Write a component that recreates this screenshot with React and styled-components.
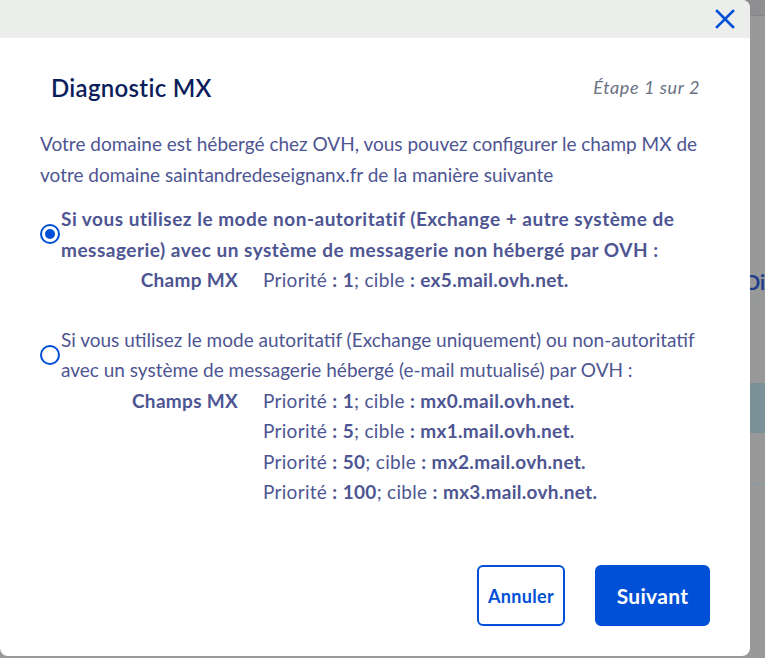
import styled, { createGlobalStyle } from "styled-components";

const GlobalStyle = createGlobalStyle`
  html, body {
    margin: 0;
    padding: 0;
  }
  body {
    font-family: Lato, "Noto Sans", "Liberation Sans", sans-serif;
    background: #999999;
  }
`;

const Screen = styled.div`
  position: relative;
  width: 765px;
  height: 658px;
  overflow: hidden;
  background: #999999;
`;

/* page behind the backdrop, only its right edge shows */
const BackPage = styled.div`
  display: flex;
  flex-direction: column;
  height: 100%;
  padding-left: 745px;
  box-sizing: border-box;
`;

const BackTopBar = styled.div`
  height: 15px;
  background: #8f8f91;
  border-bottom: 1px solid #858587;
`;

const BackHeading = styled.div`
  margin-top: 254px;
  height: 30px;
  font-size: 20px;
  font-weight: 700;
  color: #223d8c;
  white-space: nowrap;
  border-bottom: 1px solid #8c9aa0;
`;

const BackRow = styled.div`
  height: ${(p) => p.$h}px;
  background: ${(p) => p.$bg || "transparent"};
  border-bottom: ${(p) => (p.$line ? "1px solid #7f9aa3" : "none")};
`;

const Modal = styled.div`
  position: absolute;
  left: 0;
  top: 0;
  width: 750px;
  height: 656px;
  background: #ffffff;
  border-radius: 0 8px 8px 8px;
  overflow: hidden;
  display: flex;
  flex-direction: column;
`;

const ModalTop = styled.div`
  height: 38px;
  background: #eceeec;
  display: flex;
  justify-content: flex-end;
  align-items: center;
  padding-right: 14px;
`;

const CloseButton = styled.button`
  border: none;
  background: none;
  padding: 0;
  width: 22px;
  height: 22px;
  display: flex;
  cursor: pointer;
`;

const Body = styled.div`
  flex: 1;
  display: flex;
  flex-direction: column;
  padding: 0 40px 30px 40px;
`;

const TitleRow = styled.div`
  display: flex;
  justify-content: space-between;
  align-items: center;
  padding: 34px 10px 0 11px;
  height: 30px;
`;

const Title = styled.h2`
  margin: 0;
  font-size: 24px;
  font-weight: 600;
  color: #0b1e5b;
  letter-spacing: 0.3px;
`;

const Step = styled.span`
  font-size: 18px;
  font-style: italic;
  color: #6b7183;
  letter-spacing: 0.6px;
`;

const Intro = styled.p`
  margin: 26px 0 0 0;
  font-size: 19px;
  line-height: 31px;
  color: #4d5592;
`;

const Option = styled.label`
  display: flex;
  align-items: flex-start;
  margin-top: ${(p) => p.$top}px;
  cursor: pointer;
`;

const Radio = styled.span`
  flex: none;
  width: 20px;
  height: 20px;
  margin-top: 20px;
  box-sizing: border-box;
  border-radius: 50%;
  border: 2px solid #0050d7;
  display: flex;
  align-items: center;
  justify-content: center;

  &::after {
    content: "";
    width: 10px;
    height: 10px;
    border-radius: 50%;
    background: ${(p) => (p.$checked ? "#0050d7" : "transparent")};
  }
`;

const OptionText = styled.div`
  margin-left: 1px;
  font-size: 19px;
  line-height: 30.5px;
  letter-spacing: ${(p) => (p.$bold ? "0.5px" : "0")};
  color: #4d5592;
  font-weight: ${(p) => (p.$bold ? 700 : 400)};
`;

const Records = styled.div`
  display: grid;
  grid-template-columns: 158px auto;
  column-gap: 25px;
  font-size: 19px;
  line-height: 30.5px;
  letter-spacing: 0.3px;
  color: #4d5592;
  margin-left: 20px;
`;

const RecordLabel = styled.div`
  grid-column: 1;
  text-align: right;
  font-weight: 700;
`;

const RecordValue = styled.div`
  grid-column: 2;
  font-weight: 400;

  b {
    font-weight: 700;
  }
`;

const Footer = styled.div`
  margin-top: auto;
  display: flex;
  justify-content: flex-end;
  gap: 30px;
`;

const Button = styled.button`
  height: 61px;
  border-radius: 6px;
  border: 2px solid #0050d7;
  font-family: inherit;
  font-weight: 700;
  cursor: pointer;
  padding: 0;
  width: ${(p) => (p.$primary ? "115px" : "88px")};
  font-size: ${(p) => (p.$primary ? "21px" : "18px")};
  letter-spacing: 0.3px;
  background: ${(p) => (p.$primary ? "#0050d7" : "#ffffff")};
  color: ${(p) => (p.$primary ? "#ffffff" : "#0050d7")};
`;

function RecordList({ label, records }) {
  return (
    <Records>
      {records.map((r, i) => [
        i === 0 ? <RecordLabel key={"l" + i}>{label}</RecordLabel> : null,
        <RecordValue key={"v" + i}>
          Priorité <b>:</b> <b>{r.priority}</b>; cible <b>:</b> <b>{r.target}</b>
        </RecordValue>,
      ])}
    </Records>
  );
}

export default function App() {
  return (
    <Screen>
      <GlobalStyle />
      <BackPage>
        <BackTopBar />
        <BackHeading>Diagnostic</BackHeading>
        <BackRow $h={82} />
        <BackRow $h={50} $bg="#7a9198" />
        <BackRow $h={50} $line />
      </BackPage>

      <Modal>
        <ModalTop>
          <CloseButton aria-label="Fermer">
            <svg width="22" height="22" viewBox="0 0 22 22">
              <path
                d="M3 3 L19 19 M19 3 L3 19"
                stroke="#0050d7"
                strokeWidth="2.6"
                strokeLinecap="square"
                fill="none"
              />
            </svg>
          </CloseButton>
        </ModalTop>
        <Body>
          <TitleRow>
            <Title>Diagnostic MX</Title>
            <Step>Étape 1 sur 2</Step>
          </TitleRow>
          <Intro>
            Votre domaine est hébergé chez OVH, vous pouvez configurer le champ MX de
            votre domaine saintandredeseignanx.fr de la manière suivante
          </Intro>

          <Option $top={14}>
            <Radio $checked />
            <div>
              <OptionText $bold>
                Si vous utilisez le mode non-autoritatif (Exchange + autre système de
                messagerie) avec un système de messagerie non hébergé par OVH :
              </OptionText>
              <RecordList
                label="Champ MX"
                records={[{ priority: "1", target: "ex5.mail.ovh.net." }]}
              />
            </div>
          </Option>

          <Option $top={29}>
            <Radio />
            <div>
              <OptionText>
                Si vous utilisez le mode autoritatif (Exchange uniquement) ou non-autoritatif
                avec un système de messagerie hébergé (e-mail mutualisé) par OVH :
              </OptionText>
              <RecordList
                label="Champs MX"
                records={[
                  { priority: "1", target: "mx0.mail.ovh.net." },
                  { priority: "5", target: "mx1.mail.ovh.net." },
                  { priority: "50", target: "mx2.mail.ovh.net." },
                  { priority: "100", target: "mx3.mail.ovh.net." },
                ]}
              />
            </div>
          </Option>

          <Footer>
            <Button>Annuler</Button>
            <Button $primary>Suivant</Button>
          </Footer>
        </Body>
      </Modal>
    </Screen>
  );
}
